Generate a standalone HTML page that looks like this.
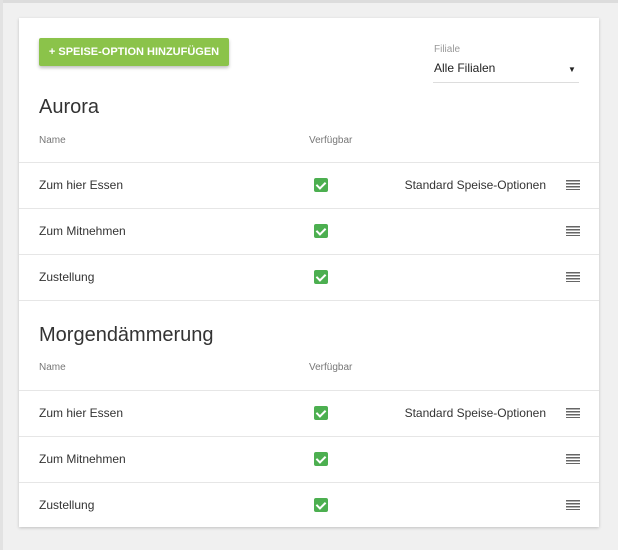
<!DOCTYPE html>
<html><head><style>
body{margin:0;width:618px;height:550px;background:#f0f0f0;font-family:"Liberation Sans",sans-serif;position:relative;overflow:hidden}
.topbar{position:absolute;left:0;top:0;width:618px;height:3px;background:#dcdcdc}
.leftbar{position:absolute;left:0;top:0;width:3px;height:550px;background:#e2e2e2}
.card{position:absolute;left:19px;top:18px;width:580px;height:509px;background:#fff;box-shadow:0 1px 3px rgba(0,0,0,.2)}
.btn{position:absolute;left:20px;top:20px;width:190px;height:28px;background:#8bc34a;color:#fff;font-size:11px;font-weight:bold;line-height:28px;text-align:center;border-radius:2px;box-shadow:0 2px 3px rgba(0,0,0,.25)}
.abs{position:absolute}
.h{font-size:20px;color:#333}
.th{font-size:10px;color:#777}
.row{position:absolute;left:0;width:580px;height:46px;border-top:1px solid #e6e6e6}
.row .n{position:absolute;left:20px;top:15px;font-size:12px;color:#333}
.cb{position:absolute;left:295px;top:15px;width:14px;height:14px;background:#4caf50;border-radius:2px}
.cb:after{content:"";position:absolute;left:4px;top:2px;width:4px;height:7px;border:solid #fff;border-width:0 2px 2px 0;transform:rotate(45deg)}
.std{position:absolute;right:53px;top:15px;font-size:12px;color:#333}
.ham{position:absolute;left:547px;top:17px;width:14px;height:10px;background:repeating-linear-gradient(#666 0 1.3px,transparent 1.3px 3px)}
</style></head><body>
<div class="topbar"></div><div class="leftbar"></div>
<div class="card">
<div class="btn">+ SPEISE-OPTION HINZUFÜGEN</div>
<div class="abs" style="left:415px;top:26px;font-size:10px;color:#999">Filiale</div>
<div class="abs" style="left:415px;top:43px;font-size:12px;color:#222">Alle Filialen</div>
<div class="abs" style="left:549px;top:47px;font-size:8px;color:#222">▼</div>
<div class="abs" style="left:414px;top:64px;width:146px;height:1px;background:#ddd"></div>

<div class="abs h" style="left:20px;top:78px">Aurora</div>
<div class="abs th" style="left:20px;top:117px">Name</div>
<div class="abs th" style="left:290px;top:117px">Verfügbar</div>
<div class="row" style="top:144px"><div class="n">Zum hier Essen</div><div class="cb"></div><div class="std">Standard Speise-Optionen</div><div class="ham"></div></div>
<div class="row" style="top:190px"><div class="n">Zum Mitnehmen</div><div class="cb"></div><div class="ham"></div></div>
<div class="row" style="top:236px"><div class="n">Zustellung</div><div class="cb"></div><div class="ham"></div></div>
<div class="row" style="top:282px;height:0"></div>

<div class="abs h" style="left:20px;top:306px">Morgendämmerung</div>
<div class="abs th" style="left:20px;top:344px">Name</div>
<div class="abs th" style="left:290px;top:344px">Verfügbar</div>
<div class="row" style="top:372px"><div class="n">Zum hier Essen</div><div class="cb"></div><div class="std">Standard Speise-Optionen</div><div class="ham"></div></div>
<div class="row" style="top:418px"><div class="n">Zum Mitnehmen</div><div class="cb"></div><div class="ham"></div></div>
<div class="row" style="top:464px"><div class="n">Zustellung</div><div class="cb"></div><div class="ham"></div></div>
</div>
</body></html>
